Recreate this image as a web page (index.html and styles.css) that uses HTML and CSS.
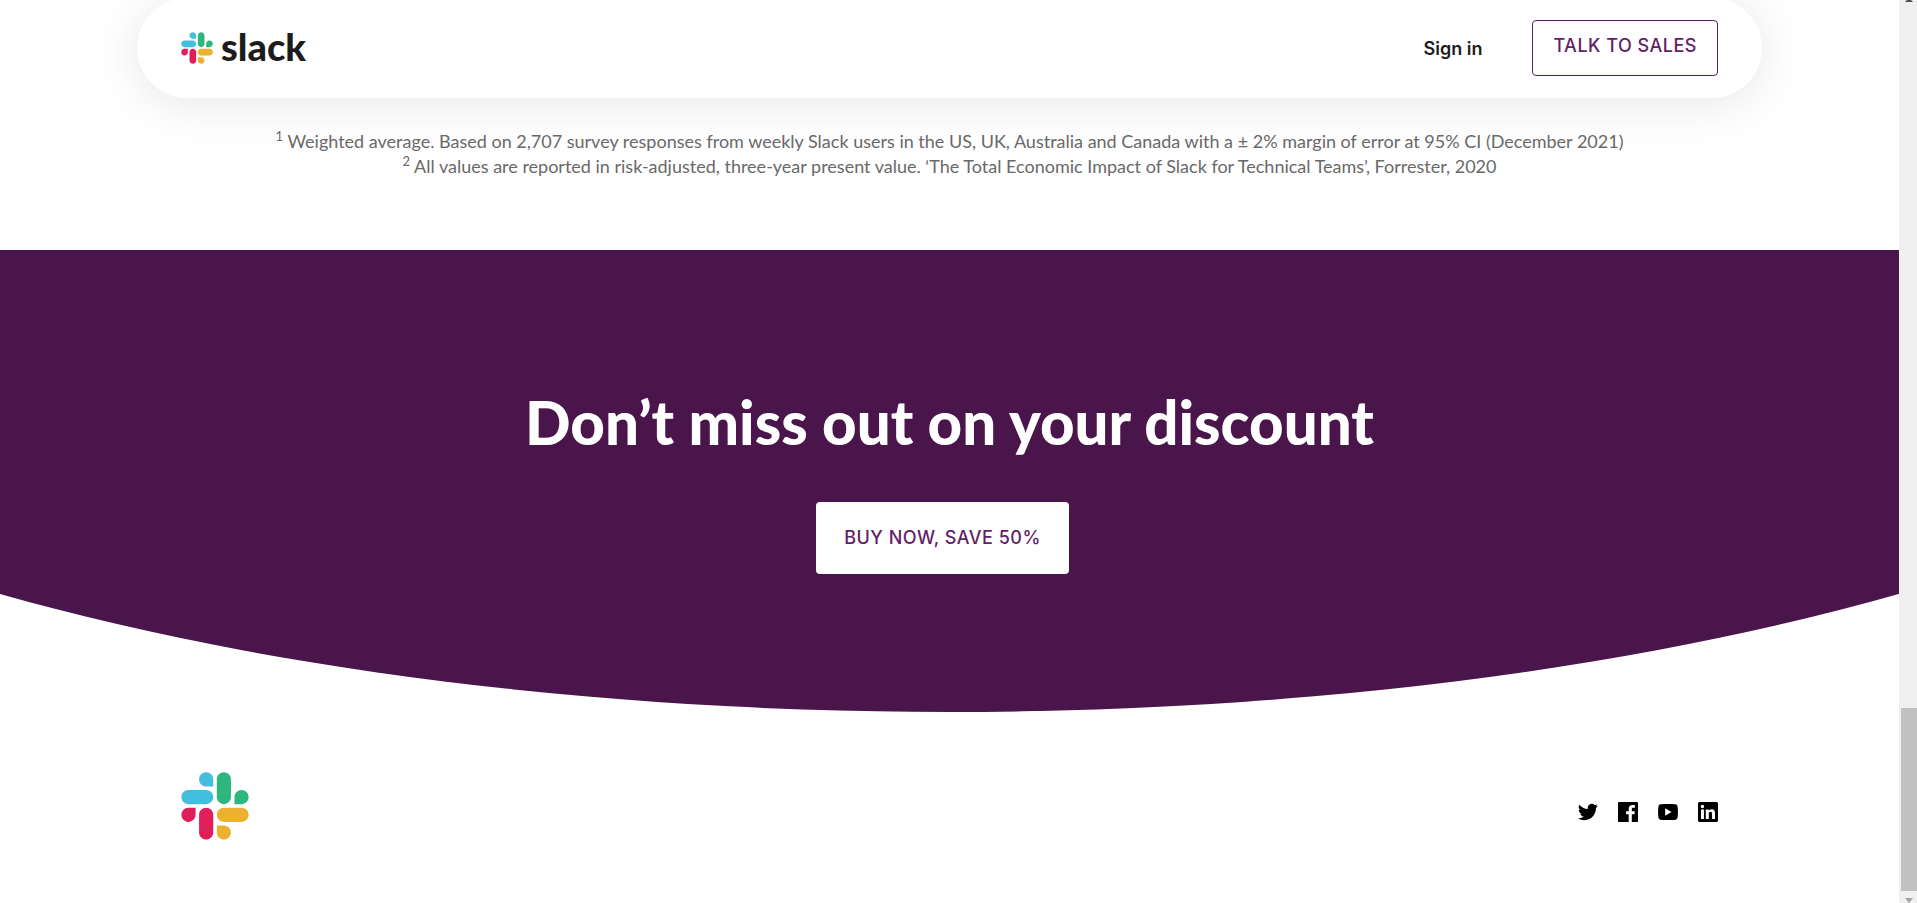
FILE: index.html
```html
<!DOCTYPE html>
<html lang="en-GB">
<head>
<meta charset="utf-8">
<meta name="viewport" content="width=device-width, initial-scale=1">
<title>Slack</title>
<link rel="stylesheet" href="styles.css">
</head>
<body>
<svg class="sprite" aria-hidden="true">
  <symbol id="slack-mark" viewBox="0 0 127 127">
    <path fill="#e01e5a" d="M27.2 80c0 7.3-5.9 13.2-13.2 13.2C6.7 93.2.8 87.3.8 80c0-7.3 5.9-13.2 13.2-13.2h13.2V80zm6.6 0c0-7.3 5.9-13.2 13.2-13.2 7.3 0 13.2 5.9 13.2 13.2v33c0 7.3-5.9 13.2-13.2 13.2-7.3 0-13.2-5.9-13.2-13.2V80z"/>
    <path fill="#44bedf" d="M47 27c-7.3 0-13.2-5.9-13.2-13.2C33.8 6.5 39.7.6 47 .6c7.3 0 13.2 5.9 13.2 13.2V27H47zm0 6.7c7.3 0 13.2 5.9 13.2 13.2 0 7.3-5.9 13.2-13.2 13.2H13.9C6.6 60.1.7 54.2.7 46.9c0-7.3 5.9-13.2 13.2-13.2H47z"/>
    <path fill="#2fb67c" d="M99.9 46.9c0-7.3 5.9-13.2 13.2-13.2 7.3 0 13.2 5.9 13.2 13.2 0 7.3-5.9 13.2-13.2 13.2H99.9V46.9zm-6.6 0c0 7.3-5.9 13.2-13.2 13.2-7.3 0-13.2-5.9-13.2-13.2V13.8C66.9 6.5 72.8.6 80.1.6c7.3 0 13.2 5.9 13.2 13.2v33.1z"/>
    <path fill="#ecb22e" d="M80.1 99.8c7.3 0 13.2 5.9 13.2 13.2 0 7.3-5.9 13.2-13.2 13.2-7.3 0-13.2-5.9-13.2-13.2V99.8h13.2zm0-6.6c-7.3 0-13.2-5.9-13.2-13.2 0-7.3 5.9-13.2 13.2-13.2h33.1c7.3 0 13.2 5.9 13.2 13.2 0 7.3-5.9 13.2-13.2 13.2H80.1z"/>
  </symbol>
</svg>

<div class="page">
  <header class="header">
    <a class="brand" href="#">
      <svg class="brand-mark" aria-hidden="true"><use href="#slack-mark"/></svg>
      <span class="brand-name">slack</span>
    </a>
    <nav class="nav">
      <a class="sign-in" href="#">Sign in</a>
      <a class="button button-outline" href="#">TALK TO SALES</a>
    </nav>
  </header>

  <main>
    <section class="notes">
      <p><sup>1</sup> Weighted average. Based on 2,707 survey responses from weekly Slack users in the US, UK, Australia and Canada with a ± 2% margin of error at 95% CI (December 2021)</p>
      <p><sup>2</sup> All values are reported in risk-adjusted, three-year present value. ‘The Total Economic Impact of Slack for Technical Teams’, Forrester, 2020</p>
    </section>

    <section class="offer">
      <h2 class="offer-title">Don’t miss out on your discount</h2>
      <a class="button button-solid" href="#">BUY NOW, SAVE 50%</a>
    </section>
  </main>

  <footer class="footer">
    <a href="#" aria-label="Slack home"><svg class="footer-mark" aria-hidden="true"><use href="#slack-mark"/></svg></a>
    <nav class="social" aria-label="Social media">
      <a href="#" aria-label="Twitter"><svg viewBox="0 0 24 24"><path d="M23.95 4.57a10 10 0 0 1-2.82.77 4.96 4.96 0 0 0 2.16-2.72c-.95.55-2 .95-3.13 1.18a4.92 4.92 0 0 0-8.38 4.48A13.97 13.97 0 0 1 1.64 3.16a4.92 4.92 0 0 0 1.52 6.57 4.9 4.9 0 0 1-2.23-.61v.06a4.92 4.92 0 0 0 3.95 4.83 5 5 0 0 1-2.21.08 4.94 4.94 0 0 0 4.6 3.42A9.87 9.87 0 0 1 0 19.54a14 14 0 0 0 7.55 2.21c9.05 0 14-7.5 14-13.98 0-.21 0-.42-.02-.63a9.94 9.94 0 0 0 2.42-2.57z"/></svg></a>
      <a href="#" aria-label="Facebook"><svg viewBox="0 0 24 24"><path d="M22.68 0H1.32C.6 0 0 .6 0 1.32v21.36C0 23.4.6 24 1.32 24h11.5v-9.29H9.69v-3.62h3.13V8.41c0-3.1 1.89-4.79 4.66-4.79 1.32 0 2.46.1 2.79.14v3.24h-1.92c-1.5 0-1.79.72-1.79 1.76v2.33h3.59l-.47 3.62h-3.12V24h6.12c.73 0 1.32-.6 1.32-1.32V1.32C24 .6 23.4 0 22.68 0z"/></svg></a>
      <a href="#" aria-label="YouTube"><svg viewBox="0 0 24 24"><path fill-rule="evenodd" d="M12 2.4c4 0 7.2.1 8.8.4 1.5.3 2.5 1.3 2.7 2.7.6 4 .6 9 0 13-.2 1.4-1.2 2.4-2.7 2.7-3.2.5-14.4.5-17.6 0-1.5-.3-2.5-1.3-2.7-2.7-.6-4-.6-9 0-13 .2-1.4 1.2-2.4 2.7-2.7 1.6-.3 4.8-.4 8.800-.4zM8.600 7.400v9.200l7.600-4.600z"/></svg></a>
      <a href="#" aria-label="LinkedIn"><svg viewBox="0 0 24 24"><path d="M22.22 0H1.77C.79 0 0 .77 0 1.73v20.54C0 23.23.79 24 1.77 24h20.45c.98 0 1.78-.77 1.78-1.73V1.73C24 .77 23.2 0 22.22 0zM7.12 20.45H3.56V9h3.56v11.45zM5.34 7.43a2.06 2.06 0 1 1 0-4.13 2.06 2.06 0 0 1 0 4.13zm15.11 13.02h-3.56v-5.57c0-1.33-.02-3.04-1.85-3.04-1.85 0-2.13 1.45-2.13 2.94v5.67H9.35V9h3.42v1.56h.04c.48-.9 1.64-1.85 3.37-1.85 3.6 0 4.27 2.37 4.27 5.46v6.28z"/></svg></a>
    </nav>
  </footer>
</div>

<div class="scrollbar" aria-hidden="true">
  <span class="arrow arrow-up"></span>
  <span class="thumb"></span>
  <span class="arrow arrow-down"></span>
</div>
</body>
</html>
```
FILE: styles.css
```css
* {
  box-sizing: border-box;
}

body {
  display: flex;
  min-height: 100vh;
  margin: 0;
  overflow: hidden;
  background: #fff;
  color: #1d1c1d;
  font-family: Inter, "Liberation Sans", sans-serif;
}

a {
  color: inherit;
  text-decoration: none;
}

svg {
  display: block;
}

.sprite {
  position: absolute;
  width: 0;
  height: 0;
}

.page {
  flex: 1;
  min-width: 0;
}

/* Header */
.header {
  display: flex;
  align-items: center;
  justify-content: space-between;
  margin: -2px 137px 0;
  padding: 22px 44px;
  border-radius: 50px;
  box-shadow: 0 5px 50px rgba(0, 0, 0, 0.1);
}

.brand {
  display: flex;
  align-items: center;
  gap: 8px;
}

.brand-mark {
  width: 32px;
  height: 32px;
}

.brand-name {
  padding-bottom: 4px;
  font-family: Lato, sans-serif;
  font-size: 38px;
  font-weight: 900;
  line-height: 40px;
}

.nav {
  display: flex;
  align-items: center;
  gap: 50px;
}

.sign-in {
  font-size: 18px;
  font-weight: 600;
}

.button {
  border-radius: 4px;
  color: #611f69;
  font-size: 18px;
  font-weight: 500;
  letter-spacing: 0.5px;
  text-align: center;
}

.button-outline {
  padding: 13px 20px 17px;
  border: 1px solid #611f69;
  line-height: 24px;
}

.button-solid {
  margin-right: 14px;
  padding: 24px 28px;
  background: #fff;
  line-height: 24px;
}

/* Footnotes */
.notes {
  padding: 31px 24px 71px;
  color: #696969;
  font-family: Lato, sans-serif;
  font-size: 18px;
  line-height: 25px;
  text-align: center;
}

.notes p {
  margin: 0;
}

.notes sup {
  font-size: 13px;
  line-height: 0;
}

/* Offer band with a curved lower edge */
.offer {
  display: flex;
  flex-direction: column;
  align-items: center;
  padding: 136px 24px 138px;
  background: #4a154b;
  clip-path: ellipse(79% 523px at 50% -61px);
}

.offer-title {
  margin: 0 0 44px;
  color: #fff;
  font-family: Lato, sans-serif;
  font-size: 60px;
  font-weight: 900;
  line-height: 72px;
}

/* Footer */
.footer {
  display: flex;
  align-items: flex-end;
  justify-content: space-between;
  margin: 0 137px;
  padding: 60px 44px 63px;
}

.footer-mark {
  width: 68px;
  height: 68px;
}

.social {
  display: flex;
  gap: 20px;
  padding-bottom: 18px;
}

.social svg {
  width: 20px;
  height: 20px;
}

/* Scrollbar */
.scrollbar {
  display: flex;
  flex-direction: column;
  align-items: center;
  width: 18px;
  padding-left: 2px;
  background: #f0f0f0;
}

.arrow {
  border: 4px solid transparent;
}

.arrow-up {
  margin-top: -6px;
  border-bottom-color: #505050;
}

.arrow-down {
  margin-top: 7px;
  border-top: 5px solid #a3a3a3;
  border-bottom-width: 0;
}

.thumb {
  width: 16px;
  height: 183px;
  margin-top: auto;
  background: #c1c1c1;
}
```
